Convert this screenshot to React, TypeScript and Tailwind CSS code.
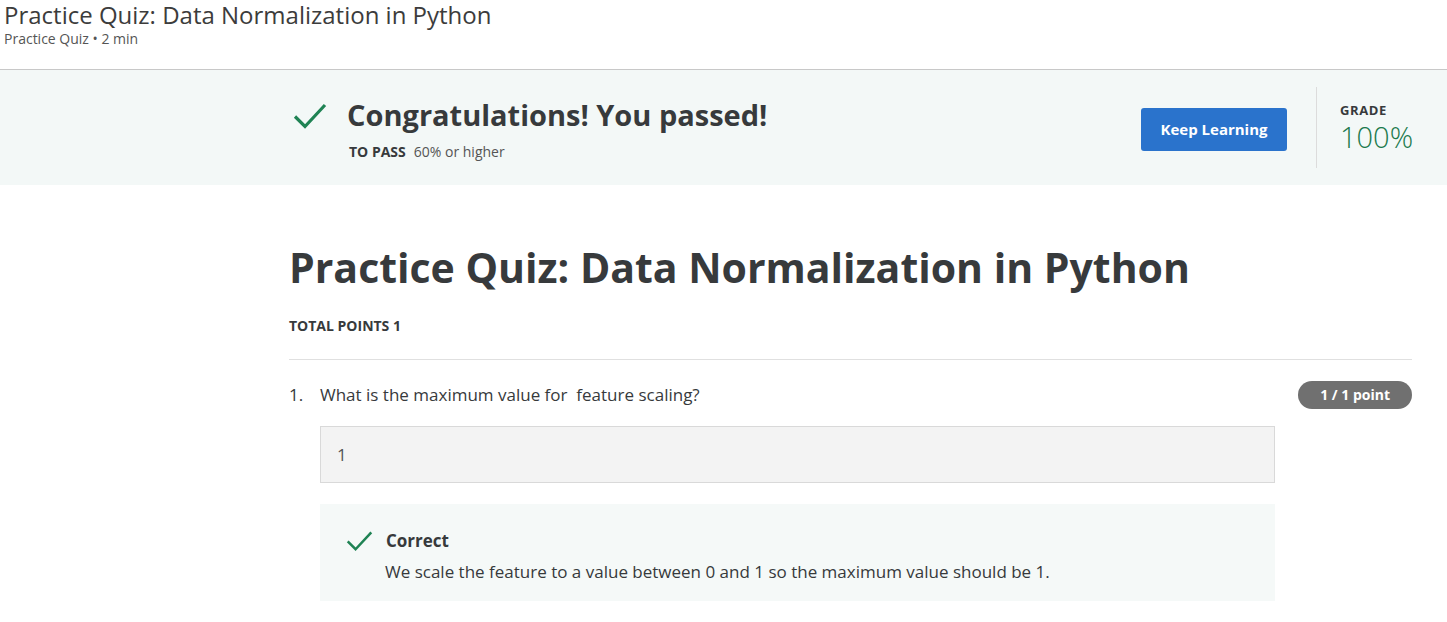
const CheckMark = ({ className }: { className?: string }) => (
  <svg viewBox="0 0 34 28" fill="none" className={className}>
    <path d="M2 14.5 L12 24.5 L32 3" stroke="currentColor" strokeWidth="3.2" strokeLinecap="butt" />
  </svg>
);

const App = () => {
  return (
    <div className="min-h-screen bg-white text-[#373a3c]" style={{ fontFamily: '"Open Sans", "Noto Sans", sans-serif' }}>
      <header className="h-[70px] border-b border-[#c8c8c8] px-1">
        <h1 className="text-[24px] leading-[30px] text-[#3c3c3c]">Practice Quiz: Data Normalization in Python</h1>
        <p className="text-[14px] leading-[18px] text-[#555]">Practice Quiz • 2 min</p>
      </header>

      <section className="bg-[#f3f8f7] h-[115px] pl-[293px] pr-[35px] flex items-center">
        <div className="flex-1 flex items-start gap-[20px] pt-[2px]">
          <CheckMark className="w-[34px] h-[28px] text-[#1f8354] mt-[7px]" />
          <div>
            <h2 className="text-[29px] leading-[40px] font-bold text-[#373a3c]">Congratulations! You passed!</h2>
            <p className="text-[14px] mt-[6px] ml-[2px]">
              <span className="font-bold text-[14px] mr-[8px]">TO PASS</span>
              <span className="text-[#555]">60% or higher</span>
            </p>
          </div>
        </div>
        <button className="h-[43px] w-[146px] mt-[4px] rounded-[3px] bg-[#2a73cc] text-white text-[15px] font-bold mr-[29px]">
          Keep Learning
        </button>
        <div className="h-[81px] border-l border-[#dcdcdc] pl-[23px] pt-[14px] w-[96px]">
          <div className="text-[13px] font-bold tracking-[0.6px] leading-[18px]">GRADE</div>
          <div className="text-[29px] font-light text-[#1b7a4d] leading-[36px]">100%</div>
        </div>
      </section>

      <main className="pl-[289px] pr-[35px] pt-[56px]">
        <h1 className="text-[41px] leading-[52px] font-bold text-[#373a3c]">Practice Quiz: Data Normalization in Python</h1>
        <p className="text-[14px] font-bold mt-[24px] leading-[18px]">TOTAL POINTS 1</p>
        <hr className="mt-[24px] border-[#e0e0e0]" />

        <div className="mt-[21px] flex items-start">
          <span className="w-[31px] text-[17px] leading-[28px] text-[#373a3c]">1.</span>
          <div className="flex-1">
            <div className="flex items-start justify-between">
              <p className="text-[17px] leading-[28px] whitespace-pre">What is the maximum value for  feature scaling?</p>
              <span className="h-[28px] px-[22px] rounded-full bg-[#707070] text-white text-[14px] font-bold leading-[28px]">1 / 1 point</span>
            </div>
            <div className="w-[955px] mt-[17px] h-[57px] bg-[#f3f3f3] border border-[#d9d9d9] px-[16px] flex items-center text-[17px] text-[#555]">
              1
            </div>
            <div className="w-[955px] mt-[21px] bg-[#f5f9f8] px-[26px] pt-[24px] pb-[17px]">
              <div className="flex items-center gap-[13px]">
                <CheckMark className="w-[27px] h-[22px] text-[#1f8354]" />
                <span className="text-[17px] font-bold">Correct</span>
              </div>
              <p className="text-[17px] ml-[39px] mt-[5px] text-[#373a3c]">
                We scale the feature to a value between 0 and 1 so the maximum value should be 1.
              </p>
            </div>
          </div>
        </div>
      </main>
    </div>
  );
};

export default App;
